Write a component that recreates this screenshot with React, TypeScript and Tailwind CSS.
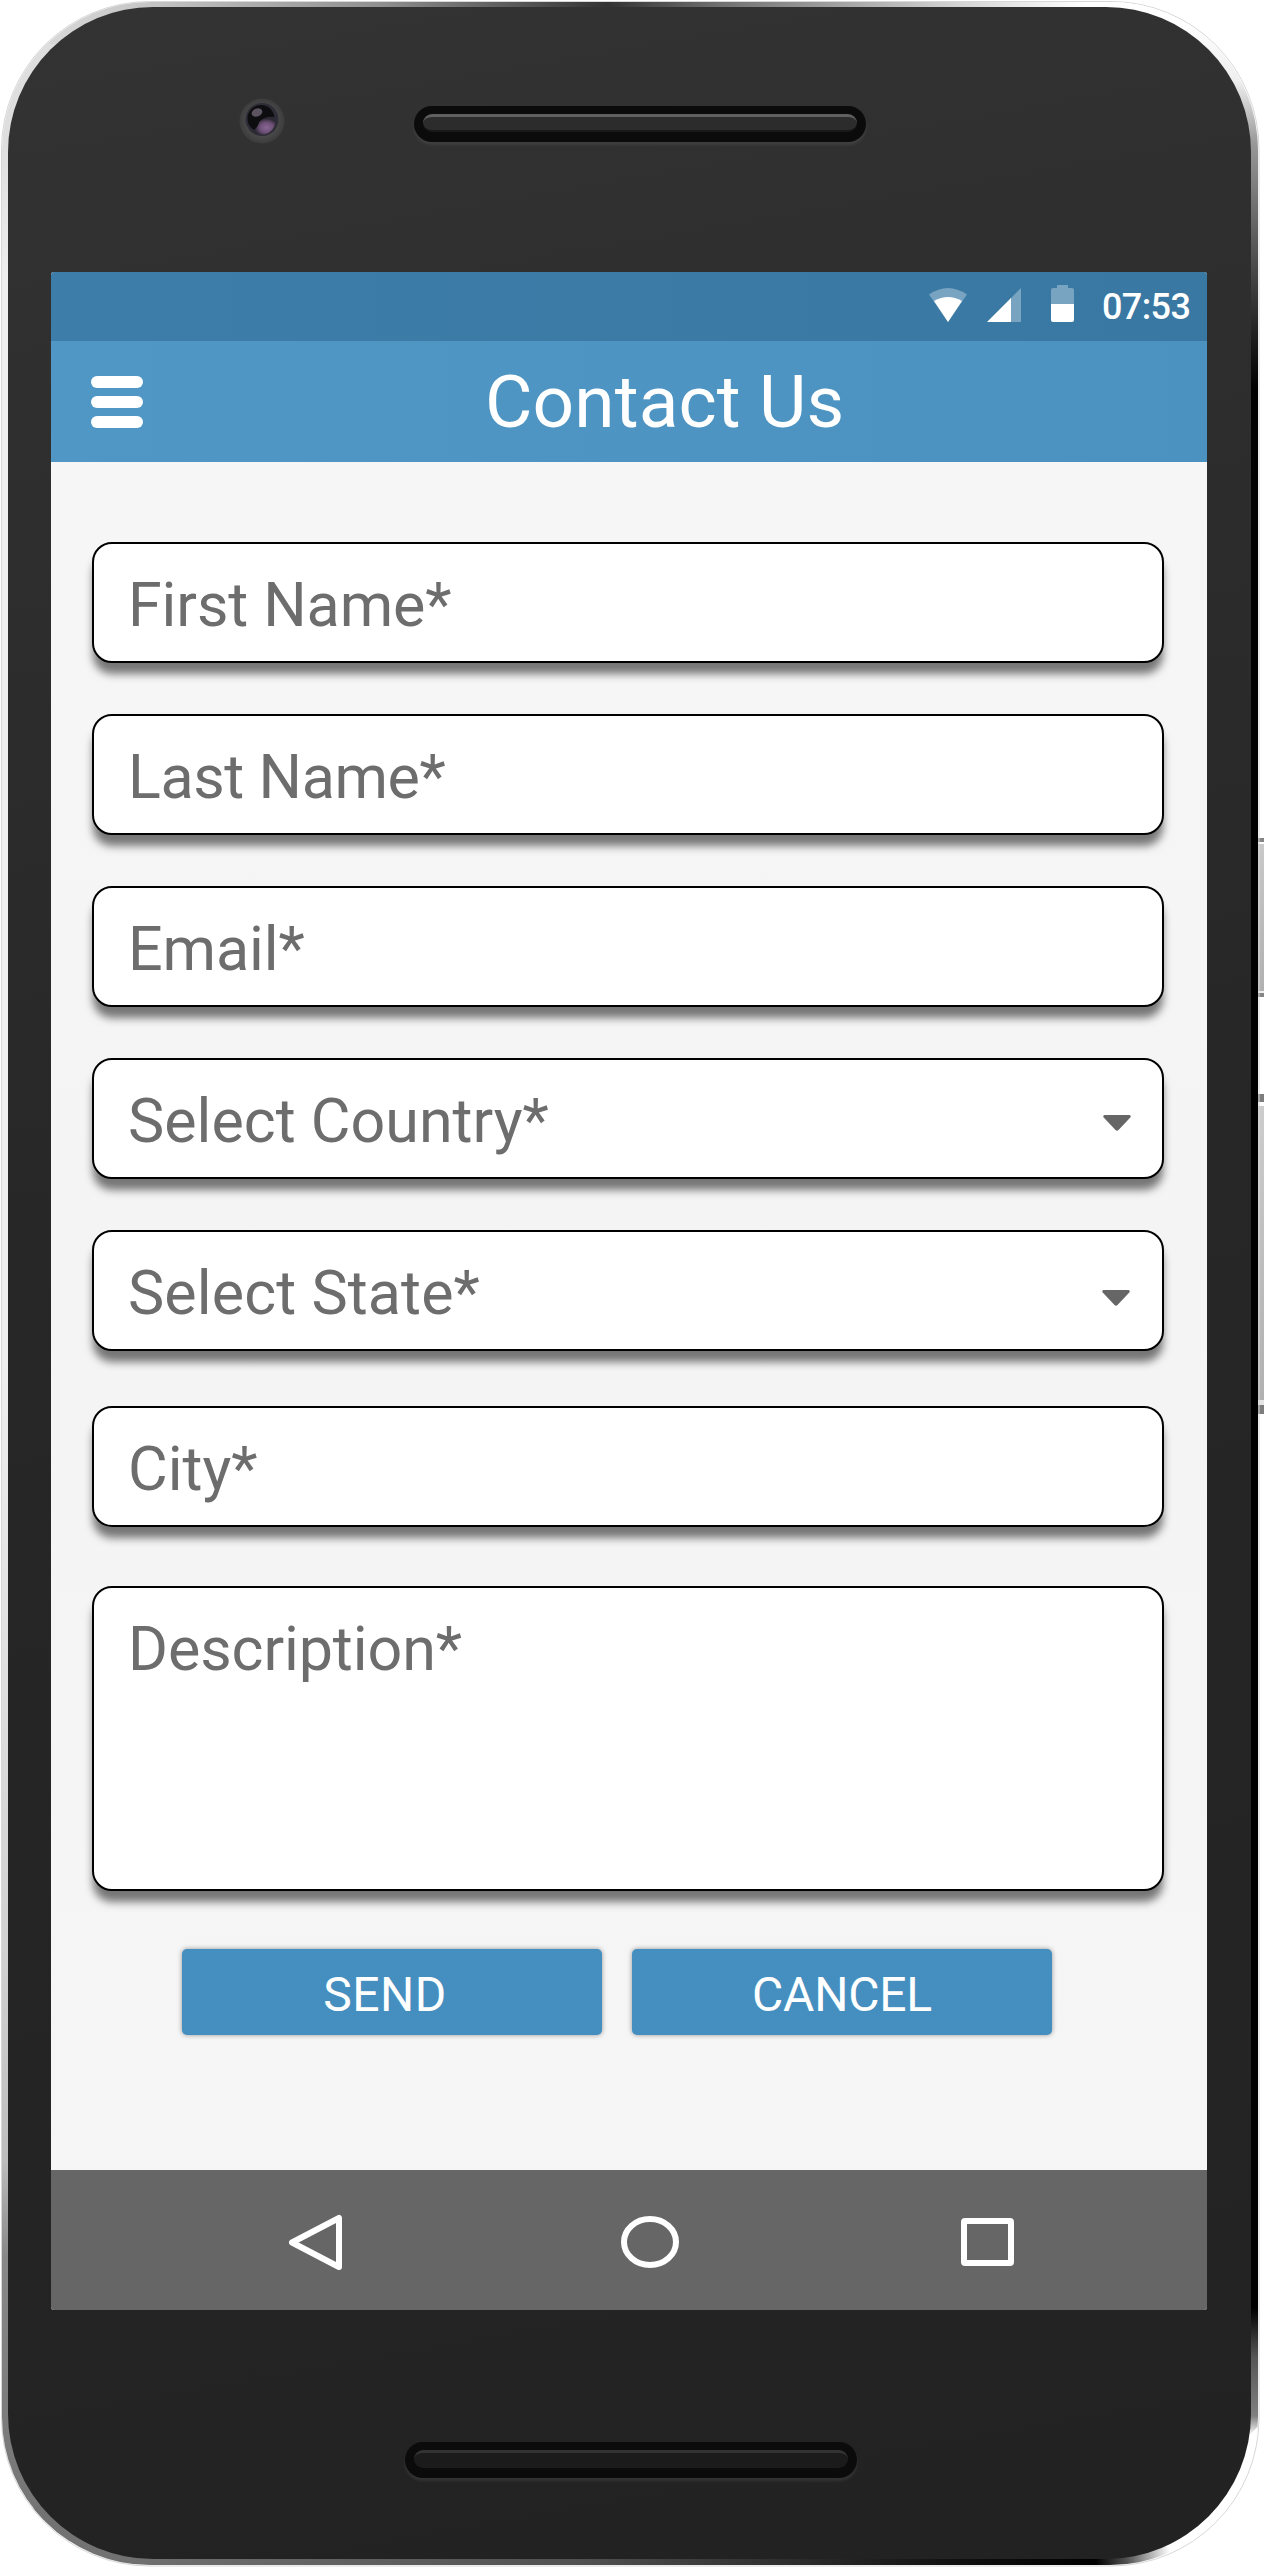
import React from "react";

const fieldBox =
  "w-[1072px] shrink-0 rounded-[20px] border-2 border-black bg-white pl-[34px] shadow-[0_12px_8px_-1px_rgba(0,0,0,0.52)] text-[61px] leading-[72px] text-[#6d6d6d]";

function Speaker({ dark }: { dark?: boolean }) {
  return (
    <div
      className={
        dark
          ? "flex h-9 w-[452px] rounded-full bg-[#0b0b0b] px-[9px] pt-2 shadow-[0_3px_3px_#343434]"
          : "flex h-9 w-[452px] rounded-full bg-[#0b0b0b] px-[9px] pt-2 shadow-[0_3px_3px_#404040]"
      }
    >
      <div
        className={
          dark
            ? "h-[18px] w-full rounded-full border-t-[3px] border-[#333] bg-[#1b1b1b]"
            : "h-[18px] w-full rounded-full border-t-[3px] border-b-2 border-t-[#606060] border-b-[#191919] bg-[#2c2c2c]"
        }
      />
    </div>
  );
}

function Field({ label, className, caret }: { label: string; className: string; caret?: string }) {
  return (
    <div className={`${fieldBox} ${className} flex h-[121px] justify-between pt-[25px]`}>
      <span>{label}</span>
      {caret && (
        <svg viewBox="0 0 28 16" className={`h-4 w-7 ${caret}`}>
          <path d="M1.5 0h25q2 .8.8 2.6L15.500 15q-1.500 1.500-3 0L.7 2.600Q-.5.800 1.500 0z" fill="#666" />
        </svg>
      )}
    </div>
  );
}

export default function App() {
  return (
    <div className="relative h-[2573px] w-[1264px] overflow-hidden bg-white font-[Roboto,sans-serif]">
      {/* side keys */}
      <div className="absolute top-[838px] left-[1258px] flex h-[159px] w-2 flex-col justify-between border-y-4 border-[#858585] bg-linear-to-b from-[#c9c9c9] to-[#b0b0b0]">
        <div className="h-[2px] bg-white" />
        <div className="h-[2px] bg-[#eee]" />
      </div>
      <div className="absolute top-[1094px] left-[1258px] flex h-[320px] w-2 flex-col justify-between border-t-8 border-b-[9px] border-[#7d7d7d] bg-linear-to-b from-[#cdcdcd] to-[#b0b0b0]">
        <div className="h-[4px] bg-white" />
        <div className="h-[5px] bg-[#e5e5e5]" />
      </div>

      {/* metal frame */}
      <svg viewBox="0 0 1264 2573" className="absolute inset-0 h-full w-full">
        <defs>
          <linearGradient id="top" x1="0" x2="1264" y1="0" y2="0" gradientUnits="userSpaceOnUse">
            <stop offset="0" stopColor="#e2e2e2" />
            <stop offset=".12" stopColor="#c4c4c4" />
            <stop offset=".3" stopColor="#909090" />
            <stop offset=".48" stopColor="#333" />
            <stop offset=".57" stopColor="#707070" />
            <stop offset=".75" stopColor="#d0d0d0" />
            <stop offset=".86" stopColor="#fff" />
          </linearGradient>
          <linearGradient id="left" x1="0" x2="0" y1="140" y2="2573" gradientUnits="userSpaceOnUse">
            <stop offset="0" stopColor="#dedede" />
            <stop offset=".06" stopColor="#efefef" />
            <stop offset=".5" stopColor="#efefef" />
            <stop offset=".75" stopColor="#d0d0d0" />
            <stop offset=".83" stopColor="#bdbdbd" />
            <stop offset=".87" stopColor="#888" />
            <stop offset="1" stopColor="#707070" />
          </linearGradient>
          <linearGradient id="right" x1="0" x2="0" y1="20" y2="2480" gradientUnits="userSpaceOnUse">
            <stop offset="0" stopColor="#fff" />
            <stop offset=".025" stopColor="#eee" />
            <stop offset=".05" stopColor="#999" />
            <stop offset=".1" stopColor="#4a4a4a" />
            <stop offset=".15" stopColor="#000" />
            <stop offset=".93" stopColor="#000" />
            <stop offset=".95" stopColor="#555" />
            <stop offset=".974" stopColor="#808080" />
            <stop offset=".982" stopColor="#fff" />
          </linearGradient>
          <linearGradient id="bottom" x1="110" x2="1170" y1="0" y2="0" gradientUnits="userSpaceOnUse">
            <stop offset="0" stopColor="#727272" />
            <stop offset=".45" stopColor="#505050" />
            <stop offset=".8" stopColor="#101010" />
            <stop offset=".93" stopColor="#000" />
            <stop offset=".96" stopColor="#555" />
            <stop offset="1" stopColor="#fff" />
          </linearGradient>
          <clipPath id="body">
            <rect x="2" y="2" width="1256" height="2563" rx="148" />
          </clipPath>
        </defs>
        <rect x="1.500" y="1.500" width="1257.500" height="2564.500" rx="148" fill="none" stroke="#d8d8d8" />
        <g clipPath="url(#body)">
          <rect width="1264" height="60" fill="url(#top)" />
          <path d="M0 44 L632 44 L632 2520 L0 2520z" fill="url(#left)" />
          <path d="M1100 0 L1264 0 V2520 H632 V60 H1100z" fill="url(#right)" />
          <path d="M0 2520 L110 2480 H1264 V2573 H0z" fill="url(#bottom)" />
          <path d="M1264 2420 V2573 H1230 L1150 2540z" fill="#fff" />
        </g>
      </svg>

      <div className="relative mt-[7px] ml-2 h-[2552px] w-[1243px] overflow-hidden rounded-[145px] bg-linear-[170deg] from-[#333] via-[#272727] via-45% to-[#222]">
        <div className="flex h-[265px] items-start">
          <svg viewBox="0 0 60 60" className="mt-[83px] ml-[228px] h-[60px] w-[60px]">
            <defs>
              <radialGradient id="lens" cx=".62" cy=".6" r=".5">
                <stop offset="0" stopColor="#8b6795" />
                <stop offset=".6" stopColor="#6a4f75" />
                <stop offset="1" stopColor="#2c2933" />
              </radialGradient>
              <radialGradient id="halo">
                <stop offset=".7" stopColor="#494949" />
                <stop offset="1" stopColor="#3c3c3c" />
              </radialGradient>
            </defs>
            <circle cx="26" cy="31" r="22.500" fill="url(#halo)" />
            <circle cx="26" cy="29.500" r="16.500" fill="#2e2c36" />
            <circle cx="25" cy="28.500" r="13.500" fill="#0d0d0f" />
            <path d="M39 27 A14 14 0 0 1 16 41 Q22 38 23 32 Q28 26 39 27z" fill="url(#lens)" />
            <ellipse cx="21" cy="22.500" rx="5.500" ry="4" fill="#5b535f" transform="rotate(-20 21 22.500)" />
          </svg>
          <div className="mt-[99px] ml-[118px]">
            <Speaker />
          </div>
        </div>

        {/* screen */}
        <div className="ml-[43px] flex h-[2038px] w-[1156px] flex-col overflow-hidden rounded-[3px] bg-linear-to-b from-[#f7f7f7] via-[#f4f4f4] to-[#f6f6f6]">
          <div className="flex h-[69px] shrink-0 bg-linear-to-r from-[#3d7da9] to-[#3878a2]">
            <svg viewBox="0 0 148 40" className="mt-[13px] ml-[877px] h-10 w-[148px] shrink-0">
              <g fill="#78a3c1">
                <path d="M1 9.500 Q20-3.500 39 9.500 L20 37z" />
                <path d="M93 3V37H82V14z" />
                <path d="M129 0h11v3h4q2 0 2 2V20H123V5q0-2 2-2h4z" />
              </g>
              <g fill="#fff">
                <path d="M6 16 Q20 8 34 16 L20 37z" />
                <path d="M59 37L83 13V37z" />
                <path d="M123 19H146V35q0 2-2 2H125q-2 0-2-2z" />
              </g>
            </svg>
            <span className="mt-[13px] ml-[26px] text-[36px] font-medium leading-[44px] tracking-[-0.6px] text-white">07:53</span>
          </div>

          <div className="flex h-[121px] shrink-0 bg-linear-to-r from-[#5197c5] to-[#4b92c0]">
            <div className="mt-[35px] ml-10 flex w-[52px] flex-col gap-2">
              <div className="h-3 rounded-md bg-white" />
              <div className="h-3 rounded-md bg-white" />
              <div className="h-3 rounded-md bg-white" />
            </div>
            <span className="mt-[18px] ml-[342px] text-[73px] leading-[86px] tracking-[0.1px] text-white">Contact Us</span>
          </div>

          <div className="flex flex-col pt-20 pl-[41px]">
            <Field label="First Name*" className="mb-[51px] tracking-[-0.1px]" />
            <Field label="Last Name*" className="mb-[51px] tracking-[-0.4px]" />
            <Field label="Email*" className="mb-[51px] tracking-[-0.1px]" />
            <Field label="Select Country*" className="mb-[51px]" caret="mt-[30px] mr-[31px]" />
            <Field label="Select State*" className="mb-[55px] tracking-[0.1px]" caret="mt-[33px] mr-[32px]" />
            <Field label="City*" className="mb-[59px]" />
            <div className={`${fieldBox} h-[305px] pt-[25px] tracking-[-0.1px]`}>Description*</div>
            <div className="mt-[58px] ml-[90px] flex gap-[30px] text-[48px] leading-[91px] text-white">
              <button className="h-[86px] w-[420px] rounded-[5px] bg-[#458fc0] shadow-[0_0_5px_rgba(0,0,0,0.4)]">
                <span className="block h-full -translate-x-[7px] tracking-[0.5px]">SEND</span>
              </button>
              <button className="h-[86px] w-[420px] rounded-[5px] bg-[#458fc0] tracking-[-0.2px] shadow-[0_0_5px_rgba(0,0,0,0.4)]">
                CANCEL
              </button>
            </div>
          </div>

          <div className="mt-auto flex h-[140px] shrink-0 bg-[#666]">
            <svg viewBox="0 0 1156 140" className="h-[140px] w-[1156px]" fill="none" stroke="#fff" strokeWidth="6" strokeLinejoin="round">
              <path d="M288 48 V97 L241 72.500z" />
              <ellipse cx="599" cy="72" rx="26" ry="23" />
              <rect x="913" y="51" width="47" height="42" rx="1" />
            </svg>
          </div>
        </div>

        <div className="mt-[132px] ml-[397px]">
          <Speaker dark />
        </div>
      </div>
    </div>
  );
}
